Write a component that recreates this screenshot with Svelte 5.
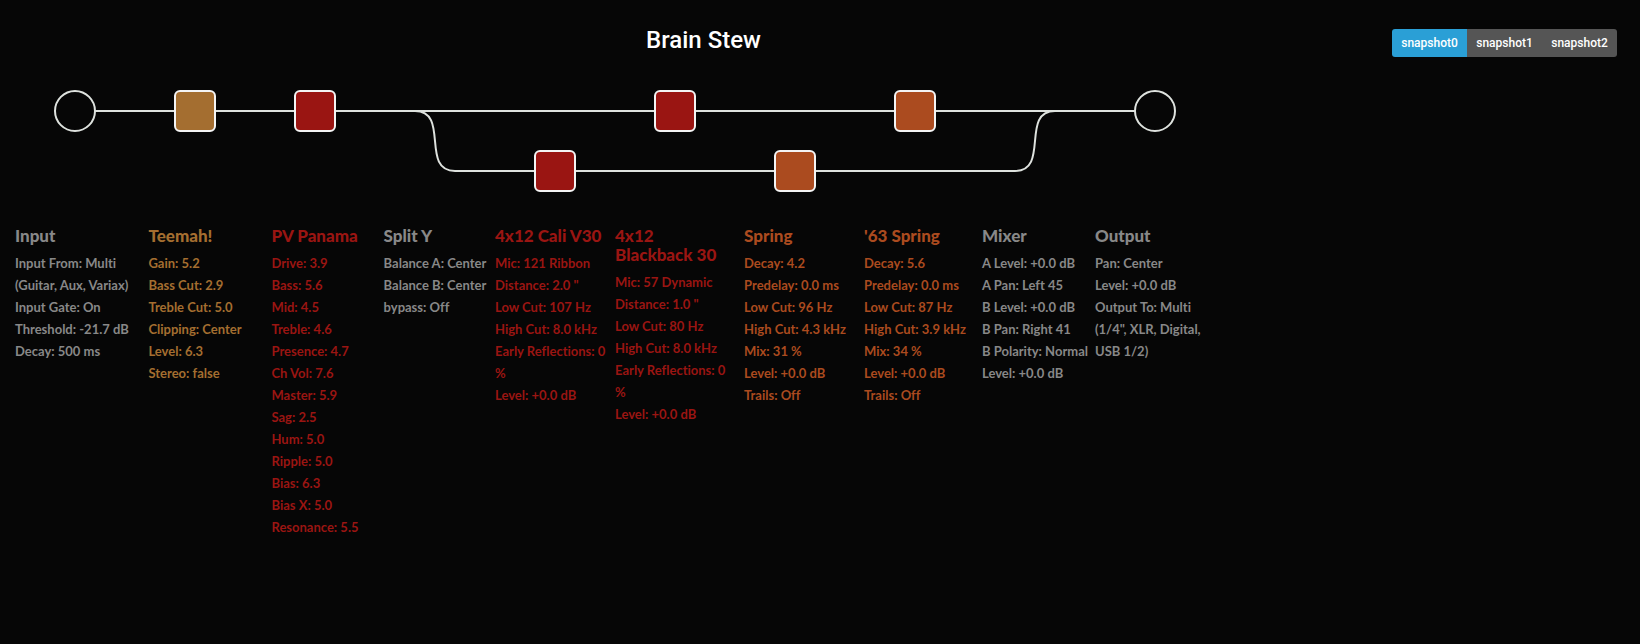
<script>
  const snapshots = ['snapshot0', 'snapshot1', 'snapshot2'];
  let active = $state('snapshot0');

  const step = 120;
  const nodes = [
    { col: 1, row: 0, tone: 'amber' },
    { col: 2, row: 0, tone: 'red' },
    { col: 4, row: 1, tone: 'red' },
    { col: 5, row: 0, tone: 'red' },
    { col: 6, row: 1, tone: 'orange' },
    { col: 7, row: 0, tone: 'orange' }
  ];

  const blocks = [
    { name: 'Input', tone: 'grey', params: ['Input From: Multi (Guitar, Aux, Variax)', 'Input Gate: On', 'Threshold: -21.7 dB', 'Decay: 500 ms'] },
    { name: 'Teemah!', tone: 'amber', params: ['Gain: 5.2', 'Bass Cut: 2.9', 'Treble Cut: 5.0', 'Clipping: Center', 'Level: 6.3', 'Stereo: false'] },
    { name: 'PV Panama', tone: 'red', params: ['Drive: 3.9', 'Bass: 5.6', 'Mid: 4.5', 'Treble: 4.6', 'Presence: 4.7', 'Ch Vol: 7.6', 'Master: 5.9', 'Sag: 2.5', 'Hum: 5.0', 'Ripple: 5.0', 'Bias: 6.3', 'Bias X: 5.0', 'Resonance: 5.5'] },
    { name: 'Split Y', tone: 'grey', params: ['Balance A: Center', 'Balance B: Center', 'bypass: Off'] },
    { name: '4x12 Cali V30', tone: 'red', params: ['Mic: 121 Ribbon', 'Distance: 2.0 "', 'Low Cut: 107 Hz', 'High Cut: 8.0 kHz', 'Early Reflections: 0 %', 'Level: +0.0 dB'] },
    { name: '4x12 Blackback 30', tone: 'red', params: ['Mic: 57 Dynamic', 'Distance: 1.0 "', 'Low Cut: 80 Hz', 'High Cut: 8.0 kHz', 'Early Reflections: 0 %', 'Level: +0.0 dB'] },
    { name: 'Spring', tone: 'orange', params: ['Decay: 4.2', 'Predelay: 0.0 ms', 'Low Cut: 96 Hz', 'High Cut: 4.3 kHz', 'Mix: 31 %', 'Level: +0.0 dB', 'Trails: Off'] },
    { name: "'63 Spring", tone: 'orange', params: ['Decay: 5.6', 'Predelay: 0.0 ms', 'Low Cut: 87 Hz', 'High Cut: 3.9 kHz', 'Mix: 34 %', 'Level: +0.0 dB', 'Trails: Off'] },
    { name: 'Mixer', tone: 'grey', params: ['A Level: +0.0 dB', 'A Pan: Left 45', 'B Level: +0.0 dB', 'B Pan: Right 41', 'B Polarity: Normal', 'Level: +0.0 dB'] },
    { name: 'Output', tone: 'grey', params: ['Pan: Center', 'Level: +0.0 dB', 'Output To: Multi (1/4", XLR, Digital, USB 1/2)'] }
  ];
</script>

<header>
  <h1>Brain Stew</h1>
  <div class="snapshots" role="group">
    {#each snapshots as name}
      <button type="button" class:active={active === name} onclick={() => (active = name)}>{name}</button>
    {/each}
  </div>
</header>

<main>
  <svg class="flow" width="1200" height="120" viewBox="0 0 1200 120">
    <g class="wire">
      <path d="M80 30H1120" />
      <path d="M400 30C435 30 405 90 440 90H1000C1035 90 1005 30 1040 30" />
    </g>
    <circle cx="60" cy="30" r="20" />
    <circle cx="1140" cy="30" r="20" />
    {#each nodes as node}
      <rect class={node.tone} x={40 + node.col * step} y={10 + node.row * 60} width="40" height="40" rx="5" />
    {/each}
  </svg>

  <div class="blocks">
    {#each blocks as block}
      <section class={block.tone}>
        <div>
          <h2>{block.name}</h2>
          <ul>
            {#each block.params as param}
              <li>{param}</li>
            {/each}
          </ul>
        </div>
      </section>
    {/each}
  </div>
</main>

<style>
  :global(body) {
    background: #060606;
  }

  header {
    display: flex;
    align-items: flex-start;
    padding: 24px 23px 0 15px;
    font-family: Roboto, sans-serif;
    color: #fff;
  }

  h1 {
    flex: 1;
    margin: 0;
    text-align: center;
    font-size: 24px;
    line-height: 32px;
    font-weight: 500;
  }

  .snapshots {
    display: flex;
    margin-top: 5px;
    border-radius: 3px;
    overflow: hidden;
  }

  button {
    border: 0;
    margin: 0;
    min-width: 75px;
    padding: 0 8px;
    background: #555;
    color: #fff;
    font-family: inherit;
    font-size: 12px;
    font-weight: 500;
    line-height: 28px;
    cursor: pointer;
  }

  button.active {
    background: #2a9fd6;
  }

  main {
    padding: 24px 15px 0;
  }

  .flow {
    display: block;
  }

  .wire {
    fill: none;
    stroke: #dee2de;
    stroke-width: 2;
  }

  circle {
    fill: #060606;
    stroke: #dee2de;
    stroke-width: 2;
  }

  rect {
    stroke: #f4f4f4;
    stroke-width: 2;
  }

  rect.amber {
    fill: #a46e30;
  }

  rect.red {
    fill: #9a1512;
  }

  rect.orange {
    fill: #ab4b1f;
  }

  .blocks {
    display: grid;
    grid-template-columns: repeat(10, 120px);
    margin-top: 25px;
    font-family: Lato, sans-serif;
    font-variant-ligatures: none;
  }

  section {
    display: flex;
    justify-content: center;
  }

  .grey {
    color: #888;
  }

  .amber {
    color: #a46e30;
  }

  .red {
    color: #9a1512;
  }

  .orange {
    color: #ab4b1f;
  }

  h2 {
    margin: 0 0 7px;
    font-size: 17px;
    line-height: 19px;
    font-weight: 900;
  }

  ul {
    margin: 0;
    padding: 0;
    list-style: none;
    font-size: 13px;
    line-height: 22px;
    font-weight: 700;
  }
</style>
